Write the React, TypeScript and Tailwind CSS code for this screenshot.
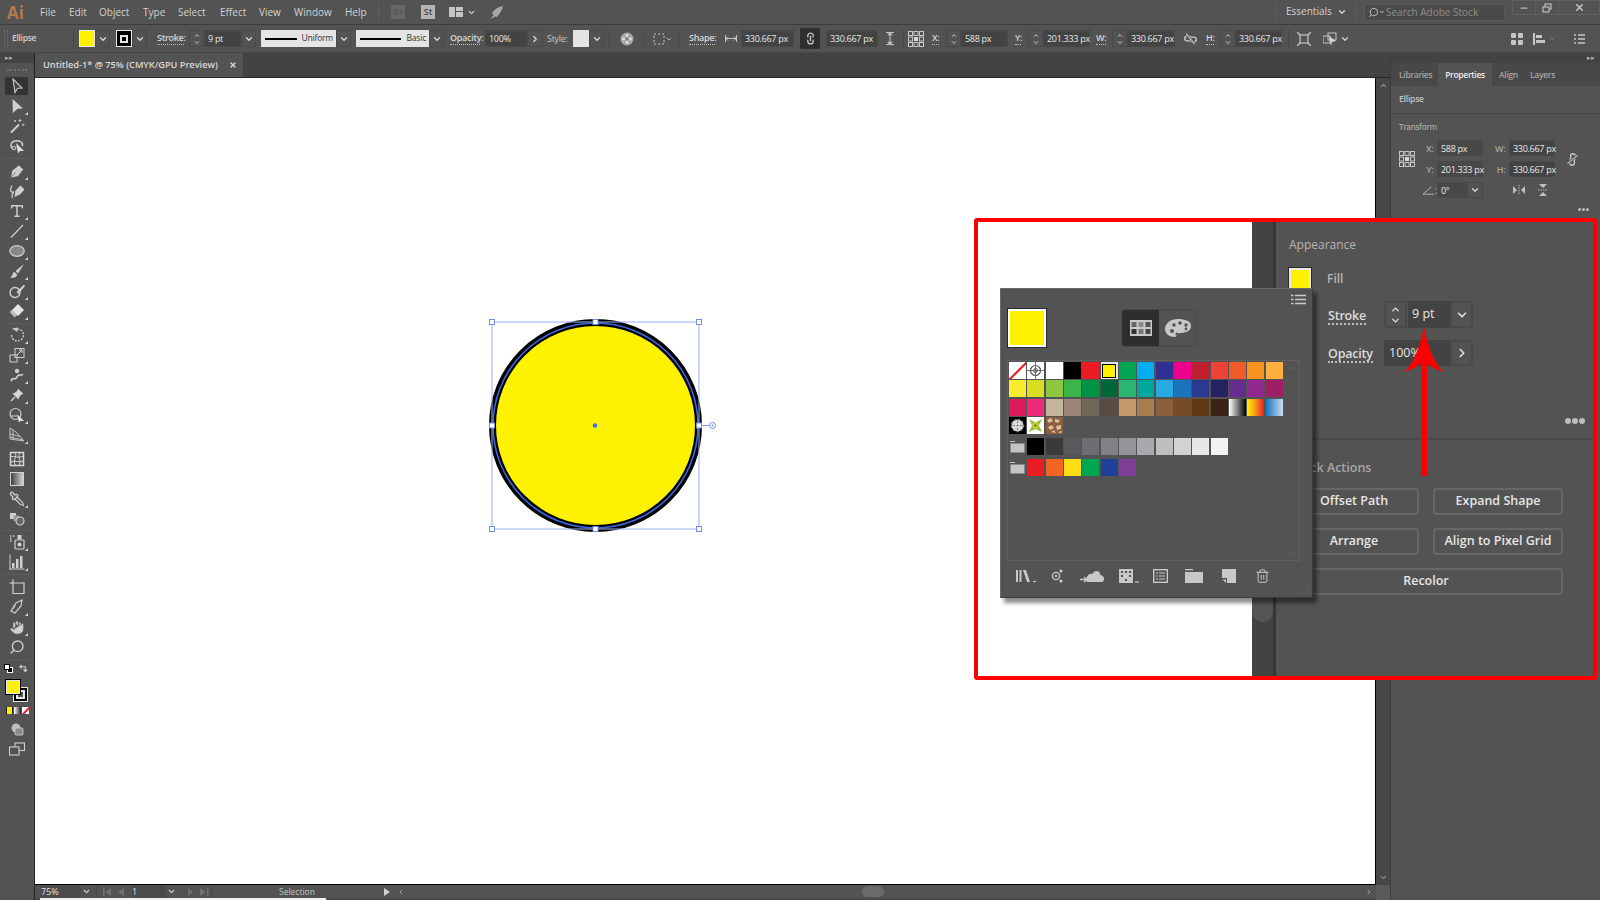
import React from 'react';
import { ChevronDown, ChevronUp, ChevronRight, ChevronLeft, Search, Hand, Pipette, Trash2, Type, Link2, X, Minus } from 'lucide-react';

const G = '#c6c6c6';

function Chev({ className = '' }: { className?: string }) {
  return (
    <div className={`h-[17px] w-[15px] flex items-center justify-center border border-[#494949] ${className}`}>
      <ChevronDown className="w-[10px] h-[10px] text-[#d8d8d8]" strokeWidth={3} />
    </div>
  );
}

function Spin({ className = '' }: { className?: string }) {
  return (
    <div className={`h-[17px] w-[15px] flex flex-col items-center justify-center border border-[#494949] ${className}`}>
      <ChevronUp className="w-[10px] h-[7px] text-[#d8d8d8]" strokeWidth={3} />
      <ChevronDown className="w-[10px] h-[7px] text-[#d8d8d8]" strokeWidth={3} />
    </div>
  );
}

function Field({ value, className = '' }: { value: string; className?: string }) {
  return (
    <div className={`h-[17px] bg-[#434343] border border-[#494949] pl-[3px] flex items-center text-[9px] leading-none tracking-[-0.3px] text-[#e8e8e8] whitespace-nowrap ${className}`}>
      {value}
    </div>
  );
}

function Sep({ className = '' }: { className?: string }) {
  return <div className={`w-px h-[20px] bg-[#484848] ${className}`} />;
}

function Label({ text, className = '' }: { text: string; className?: string }) {
  return (
    <div className={`text-[9px] leading-[12px] font-semibold text-[#d6d6d6] border-b border-dotted border-[#c0c0c0] tracking-[-0.3px] whitespace-nowrap ${className}`}>
      {text}
    </div>
  );
}

function RefGrid({ className = '' }: { className?: string }) {
  const cells = [0, 1, 2, 3, 4, 5, 6, 7, 8];
  return (
    <svg viewBox="0 0 16 16" className={className}>
      {cells.map(i => {
        const x = 0.5 + (i % 3) * 5.5;
        const y = 0.5 + Math.floor(i / 3) * 5.5;
        return i === 4
          ? <rect key={i} x={x} y={y} width="4" height="4" fill="#d8d8d8" />
          : <rect key={i} x={x} y={y} width="4" height="4" fill="none" stroke="#c8c8c8" strokeWidth="1" />;
      })}
    </svg>
  );
}

// broken chain link, a chain with a slash through it
function SlashedLink({ className = '' }: { className?: string }) {
  return (
    <svg viewBox="0 0 14 12" className={className}>
      <rect x="0.8" y="3" width="7" height="5" rx="2.5" fill="none" stroke="#c6c6c6" strokeWidth="1.5" />
      <rect x="6.2" y="4" width="7" height="5" rx="2.5" fill="none" stroke="#c6c6c6" strokeWidth="1.5" />
      <path d="M2.5 0.5L11.5 11.5" stroke="#535353" strokeWidth="3" />
      <path d="M2.5 0.5L11.5 11.5" stroke="#c6c6c6" strokeWidth="1.2" />
    </svg>
  );
}

function MenuBar() {
  const items = [
    { label: 'File', w: 'w-[29px]' },
    { label: 'Edit', w: 'w-[30px]' },
    { label: 'Object', w: 'w-[44px]' },
    { label: 'Type', w: 'w-[35px]' },
    { label: 'Select', w: 'w-[42px]' },
    { label: 'Effect', w: 'w-[39px]' },
    { label: 'View', w: 'w-[35px]' },
    { label: 'Window', w: 'w-[51px]' },
    { label: 'Help', w: 'w-[33px]' },
  ];
  return (
    <div className="h-[25px] flex items-center border-b border-[#3d3d3d] bg-[#535353]">
      <div className="ml-[7px] w-[33px] text-[17px] font-bold text-[#b27a4c] leading-none">Ai</div>
      {items.map(m => (
        <div key={m.label} className={`${m.w} -mt-[1px] text-[10px] text-[#d2d2d2] leading-none`}>{m.label}</div>
      ))}
      <div className="w-px h-[18px] bg-[#5e5e5e]" />
      <div className="ml-[12px] w-[14px] h-[14px] bg-[#666] text-[9px] leading-[14px] text-center font-semibold text-[#555]">Br</div>
      <div className="ml-[16px] w-[14px] h-[14px] bg-[#b4b4b4] text-[9px] leading-[14px] text-center font-semibold text-[#444]">St</div>
      <svg viewBox="0 0 14 10" className="ml-[14px] w-[14px] h-[10px]">
        <rect width="6" height="10" fill={G} />
        <rect x="7" width="7" height="4" fill={G} />
        <rect x="7" y="5" width="7" height="5" fill={G} />
      </svg>
      <ChevronDown className="ml-[4px] w-[9px] h-[9px] text-[#d0d0d0]" strokeWidth={3} />
      <svg viewBox="0 0 16 16" className="ml-[13px] w-[15px] h-[15px]">
        <path d="M15 1 C9 2 5 5 3 9 L5 10 L2 15 L7 12 L8 13 C11 10 14 6 15 1Z" fill="#a8a8a8" />
      </svg>
      <div className="ml-auto flex items-center">
        <div className="w-px h-[18px] bg-[#5e5e5e]" />
        <div className="ml-[9px] w-[48px] -mt-[2px] text-[10px] text-[#d2d2d2] leading-none">Essentials</div>
        <ChevronDown className="ml-[3px] w-[10px] h-[10px] text-[#d0d0d0]" strokeWidth={3} />
        <div className="ml-[9px] w-px h-[18px] bg-[#5e5e5e]" />
        <div className="ml-[7px] w-[141px] h-[17px] bg-[#4a4a4a] border border-[#5a5a5a] rounded-[2px] flex items-center pl-[3px]">
          <Search className="w-[11px] h-[11px] text-[#c0c0c0] -scale-x-100" strokeWidth={2} />
          <ChevronDown className="w-[6px] h-[6px] text-[#c0c0c0]" strokeWidth={4} />
          <span className="ml-[1px] text-[10px] leading-none text-[#8c8c8c]">Search Adobe Stock</span>
        </div>
        <div className="ml-[7px] -mt-[9px] flex h-[15px] border border-[#606060] rounded-b-[2px]">
          <div className="w-[23px] flex items-center justify-center border-r border-[#606060]">
            <Minus className="w-[10px] h-[10px] text-[#b8b8b8]" strokeWidth={3} />
          </div>
          <div className="w-[23px] flex items-center justify-center border-r border-[#606060]">
            <svg viewBox="0 0 10 10" className="w-[10px] h-[10px]"><rect x="3" y="1" width="6" height="5" fill="none" stroke="#c0c0c0" strokeWidth="1.2" /><rect x="1" y="4" width="6" height="5" fill="#535353" stroke="#c0c0c0" strokeWidth="1.2" /></svg>
          </div>
          <div className="w-[40px] flex items-center justify-center">
            <X className="w-[11px] h-[11px] text-[#c8c8c8]" strokeWidth={3} />
          </div>
        </div>
      </div>
    </div>
  );
}

function StrokePreview({ text, className, line }: { text: string; className: string; line: string }) {
  return (
    <div className={`h-[17px] bg-[#e4e4e4] flex items-center pl-[4px] ${className}`}>
      <div className={`h-[2px] bg-black flex-none ${line}`} />
      <span className="ml-auto mr-[3px] text-[8.5px] tracking-[-0.2px] leading-none text-[#333]">{text}</span>
    </div>
  );
}

function ControlBar() {
  return (
    <div className="h-[28px] flex items-center bg-[#535353] border-b border-[#474747]">
      <div className="ml-[4px] w-[4px] h-[18px] border-x border-dotted border-[#6e6e6e]" />
      <div className="ml-[4px] w-[61px] text-[8.5px] font-semibold tracking-[-0.3px] text-[#d0d0d0] leading-none">Ellipse</div>
      <Sep />
      <div className="ml-[5px] w-[16px] h-[17px] bg-[#fff200] border border-[#e8e8e8]" />
      <Chev />
      <div className="ml-[6px] w-[16px] h-[17px] bg-black border border-[#e8e8e8] flex items-center justify-center">
        <div className="w-[8px] h-[8px] border-2 border-[#e8e8e8] bg-black" />
      </div>
      <Chev />
      <Label text="Stroke:" className="ml-[10px] w-[27px]" />
      <Spin className="ml-[5px]" />
      <Field value="9 pt" className="w-[37px]" />
      <Chev />
      <StrokePreview text="Uniform" line="w-[32px]" className="ml-[5px] w-[75px]" />
      <Chev />
      <StrokePreview text="Basic" line="w-[41px]" className="ml-[5px] w-[73px]" />
      <Chev />
      <Label text="Opacity:" className="ml-[6px] w-[30px]" />
      <Field value="100%" className="ml-[5px] w-[42px]" />
      <div className="h-[17px] w-[16px] flex items-center justify-center border border-[#494949]">
        <ChevronRight className="w-[10px] h-[10px] text-[#d8d8d8]" strokeWidth={3} />
      </div>
      <div className="ml-[4px] w-[22px] text-[9px] tracking-[-0.3px] text-[#c8c8c8] leading-none">Style:</div>
      <div className="ml-[4px] w-[16px] h-[17px] bg-[#e4e4e4]" />
      <Chev />
      <Sep className="ml-[5px]" />
      <svg viewBox="0 0 14 14" className="ml-[10px] w-[14px] h-[14px]">
        <circle cx="7" cy="7" r="6.5" fill="#a8a8a8" />
        <circle cx="7" cy="3.5" r="1.4" fill="#dedede" /><circle cx="7" cy="10.5" r="1.4" fill="#dedede" />
        <circle cx="3.5" cy="7" r="1.4" fill="#dedede" /><circle cx="10.5" cy="7" r="1.4" fill="#dedede" />
        <circle cx="7" cy="7" r="1.2" fill="#777" />
      </svg>
      <Sep className="ml-[9px]" />
      <svg viewBox="0 0 12 12" className="ml-[9px] w-[12px] h-[12px]">
        <rect x="1" y="1" width="10" height="10" fill="none" stroke="#c0c0c0" strokeWidth="1" strokeDasharray="2 2" />
      </svg>
      <ChevronDown className="w-[8px] h-[8px] text-[#c0c0c0]" strokeWidth={2.5} />
      <Sep className="ml-[5px]" />
      <Label text="Shape:" className="ml-[10px] w-[26px]" />
      <svg viewBox="0 0 12 7" className="ml-[10px] w-[12px] h-[7px]">
        <path d="M0.5 0V7M11.5 0V7M1 3.5H11M3 1.5L1 3.5L3 5.5M9 1.5L11 3.5L9 5.5" stroke="#c6c6c6" fill="none" strokeWidth="1" />
      </svg>
      <Field value="330.667 px" className="ml-[4px] w-[53px]" />
      <div className="ml-[6px] w-[20px] h-[21px] bg-[#2f2f2f] rounded-[2px] flex items-center justify-center">
        <Link2 className="w-[13px] h-[13px] text-[#c8c8c8] rotate-90" strokeWidth={2.4} />
      </div>
      <Field value="330.667 px" className="ml-[6px] w-[52px]" />
      <svg viewBox="0 0 7 12" className="ml-[8px] w-[8px] h-[13px]">
        <path d="M0 0.5H7M0 11.5H7M3.5 1V11M1.5 3L3.5 1L5.5 3M1.5 9L3.5 11L5.5 9" stroke="#c6c6c6" fill="none" strokeWidth="1" />
      </svg>
      <Sep className="ml-[9px]" />
      <RefGrid className="ml-[4px] w-[16px] h-[16px]" />
      <Label text="X:" className="ml-[8px] w-[7px]" />
      <Spin className="ml-[7px]" />
      <Field value="588 px" className="w-[47px]" />
      <Label text="Y:" className="ml-[7px] w-[6px]" />
      <Spin className="ml-[7px]" />
      <Field value="201.333 px" className="w-[47px]" />
      <Label text="W:" className="ml-[6px] w-[10px]" />
      <Spin className="ml-[6px]" />
      <Field value="330.667 px" className="w-[48px]" />
      <SlashedLink className="ml-[9px] w-[13px] h-[12px]" />
      <Label text="H:" className="ml-[9px] w-[8px]" />
      <Spin className="ml-[6px]" />
      <Field value="330.667 px" className="w-[47px]" />
      <Sep className="ml-[6px]" />
      <svg viewBox="0 0 14 14" className="ml-[8px] w-[14px] h-[14px]">
        <rect x="3" y="3" width="8" height="8" fill="none" stroke="#c6c6c6" strokeWidth="1.2" />
        <path d="M0 0L3 3M14 0L11 3M0 14L3 11M14 14L11 11" stroke="#c6c6c6" strokeWidth="1.4" />
      </svg>
      <svg viewBox="0 0 16 14" className="ml-[12px] w-[16px] h-[14px]">
        <rect x="5" y="1" width="8" height="7" fill="none" stroke="#c6c6c6" strokeWidth="1" />
        <rect x="0" y="4" width="7" height="7" fill="none" stroke="#c6c6c6" strokeWidth="1" />
        <path d="M6 4L13 9L9 10L8 14Z" fill="#d4d4d4" />
      </svg>
      <ChevronDown className="ml-[1px] w-[10px] h-[10px] text-[#d0d0d0]" strokeWidth={3} />
      <div className="ml-auto flex items-center">
        <svg viewBox="0 0 12 12" className="w-[12px] h-[12px]">
          <rect width="5" height="5" rx="1" fill={G} /><rect x="7" width="5" height="5" rx="1" fill={G} />
          <rect y="7" width="5" height="5" rx="1" fill={G} /><rect x="7" y="7" width="5" height="5" rx="1" fill={G} />
        </svg>
        <svg viewBox="0 0 12 12" className="ml-[10px] w-[12px] h-[12px]">
          <rect width="2" height="12" fill={G} /><rect x="3" y="2" width="6" height="3" fill={G} /><rect x="3" y="7" width="9" height="3" fill={G} />
        </svg>
        <ChevronDown className="ml-[3px] w-[9px] h-[9px] text-[#707070]" strokeWidth={3} />
        <svg viewBox="0 0 11 10" className="ml-[17px] mr-[15px] w-[11px] h-[10px]">
          <path d="M0 1H2M4 1H11M0 5H2M4 5H11M0 9H2M4 9H11" stroke={G} strokeWidth="1.4" />
        </svg>
      </div>
    </div>
  );
}

// each tool is one 16x16 drawing
const tools: Record<string, React.ReactNode> = {
  selection: <path d="M4 1L13 10L8.6 10.2L6 14.5Z" fill="#404040" stroke="#cfcfcf" strokeWidth="1.1" />,
  direct: <path d="M3.5 1L14 10.5L8.8 10.7L3.8 15Z" fill="#cfcfcf" />,
  wand: <g><path d="M2 14.5L10 6.5" stroke="#d0d0d0" strokeWidth="2" /><path d="M11 1V4M9.5 2.5H12.5M14 5.5V8M13 6.8H15.5M6 2V4M5 3H7" stroke="#d0d0d0" strokeWidth="0.9" /></g>,
  lasso: <g><path d="M4 11C1 9 1 4 6 3C11 2 15 5 13 8" fill="none" stroke="#cfcfcf" strokeWidth="1.4" /><circle cx="5" cy="10" r="1.8" fill="none" stroke="#cfcfcf" /><path d="M7 5L15 13L11 13L9 15.5Z" fill="#dcdcdc" /></g>,
  pen: <path d="M1.5 15L3 7.5L10 2L14.5 6.5L9 13.5ZM1.5 15L6.5 9.5" fill="#cfcfcf" stroke="#535353" strokeWidth="0.7" />,
  curvature: <g><path d="M5.5 14L6.5 7.5L11.5 2.5L15.5 6.5L11 11.5Z" fill="#cfcfcf" /><path d="M3 2.5C0 7 2 10 4 9C6 8 1.5 12 3.5 15" fill="none" stroke="#cfcfcf" strokeWidth="1.3" /></g>,
  line: <path d="M2 14.5L14 2" stroke="#cfcfcf" strokeWidth="1.2" />,
  ellipse: <ellipse cx="8" cy="8" rx="7.2" ry="5.4" fill="#888" stroke="#d0d0d0" strokeWidth="1.2" />,
  brush: <g><path d="M15 1L6.5 8L9 10.5Z" fill="#cfcfcf" /><path d="M5.5 9C3 9.5 4.5 12.5 1 14.5C5 15.5 8.5 14 8 11Z" fill="#cfcfcf" /></g>,
  blob: <g><circle cx="6" cy="9.5" r="5" fill="none" stroke="#cfcfcf" strokeWidth="1.4" /><path d="M15 1.5L7.5 9L9.5 11L16 3Z" fill="#cfcfcf" /></g>,
  eraser: <g><path d="M9 1L15 7L9 13L3 7Z" fill="#e4e4e4" /><path d="M3 7L1 9L5.5 14L8 12Z" fill="#bdbdbd" stroke="#cfcfcf" strokeWidth="0.6" /></g>,
  rotate: <g><path d="M2.5 8A6 6 0 1 0 8 2" fill="none" stroke="#cfcfcf" strokeWidth="1.3" strokeDasharray="2 1.2" /><path d="M3 1.5L8.5 0.5L8.5 5Z" fill="#cfcfcf" /></g>,
  scale: <g><rect x="6" y="1.5" width="9" height="9" fill="none" stroke="#cfcfcf" strokeWidth="1" /><rect x="1" y="8" width="7" height="7" fill="none" stroke="#cfcfcf" strokeWidth="1" /><path d="M8 8L13 3M10 3H13V6" stroke="#dcdcdc" fill="none" /></g>,
  warp: <g><path d="M2 13C5 9 5 15 8 10C11 5 10 11 14 7" stroke="#cfcfcf" strokeWidth="1.6" fill="none" /><circle cx="8" cy="4" r="2.2" fill="#cfcfcf" /><circle cx="2.5" cy="13.5" r="1" fill="#cfcfcf" /></g>,
  pin: <g><path d="M9 1.5L14.5 7L12.5 7.5L10 10.5L9.5 12.5L3.5 6.5L5.5 6L8.5 3.5Z" fill="#d4d4d4" /><path d="M6 10L2 14" stroke="#d4d4d4" strokeWidth="1.3" /></g>,
  shapeBuilder: <g><circle cx="6.5" cy="7" r="5.5" fill="none" stroke="#cfcfcf" strokeWidth="1.2" /><path d="M8 7L15 14L11 14L10 16Z" fill="#e0e0e0" /><path d="M1 9H8" stroke="#cfcfcf" /></g>,
  perspective: <g fill="none" stroke="#cfcfcf" strokeWidth="0.9"><path d="M1 1V12L15 14L7 5Z" /><path d="M4 3.5V12.5M1 7L11 9.5M1 10L14 13" /></g>,
  mesh: <g fill="none" stroke="#d8d8d8" strokeWidth="1"><rect x="1.5" y="1.5" width="13" height="13" strokeWidth="1.5" /><path d="M6 1.5C9 5 3 9 6.5 14.5M11 1.5C8 6 13 9 10 14.5M1.5 6C5 4 9 8 14.5 5M1.5 11C6 9 9 12 14.5 10" /></g>,
  gradient: <g><defs><linearGradient id="tg" x1="0" x2="1"><stop offset="0" stopColor="#3a3a3a" /><stop offset="1" stopColor="#dadada" /></linearGradient></defs><rect x="1.5" y="1.5" width="13" height="13" fill="url(#tg)" stroke="#d0d0d0" /></g>,
  blend: <g><rect x="1" y="2" width="6" height="6" fill="#d0d0d0" /><rect x="4.5" y="4.5" width="5.5" height="5.5" fill="#999" /><circle cx="11" cy="10" r="4" fill="#666" stroke="#d0d0d0" strokeWidth="1.2" /></g>,
  symbol: <g><rect x="6" y="6" width="9" height="9" rx="1" fill="none" stroke="#d0d0d0" strokeWidth="1.2" /><circle cx="10.5" cy="10.5" r="2" fill="#d0d0d0" /><rect x="8.5" y="1" width="4" height="4.5" fill="#d0d0d0" /><path d="M1 2H2.5M4 2H5.5M1 4.5H2.5M1 7H2.5" stroke="#d0d0d0" strokeWidth="1.5" /></g>,
  graph: <g fill="#d0d0d0"><rect x="0.5" y="0.5" width="1" height="15" /><rect x="0.5" y="14.5" width="15" height="1" /><rect x="3" y="9" width="2.5" height="5" /><rect x="7" y="5" width="2.5" height="9" /><rect x="11" y="2" width="2.5" height="12" /></g>,
  artboard: <g fill="none" stroke="#cfcfcf" strokeWidth="1.2"><path d="M4 0.5V4H15V14.5H4V4" /><path d="M0.5 4H4" /></g>,
  slice: <g><path d="M13 1L7 4L2 12L6 14L12 7Z" fill="none" stroke="#cfcfcf" strokeWidth="1.2" /><path d="M7 4L2 12L6 8Z" fill="#cfcfcf" /></g>,
  drawMode: <g><circle cx="7" cy="7" r="4.5" fill="#bdbdbd" /><rect x="6" y="7" width="8" height="7" rx="1" fill="#8a8a8a" stroke="#d0d0d0" strokeWidth="0.8" /></g>,
  screen: <g fill="#535353" stroke="#cfcfcf" strokeWidth="1.1"><rect x="6" y="2" width="9.5" height="7.5" /><rect x="0.5" y="6" width="9.5" height="8" /></g>,
};

function Tool({ icon, corner = true, active = false }: { icon: React.ReactNode; corner?: boolean; active?: boolean }) {
  return (
    <div className="relative h-[20px] flex items-center justify-center">
      {active && <div className="absolute left-[5px] right-[6px] top-[1px] bottom-[1px] bg-[#333] rounded-[2px]" />}
      <div className="relative w-[16px] h-[16px] flex items-center justify-center">{icon}</div>
      {corner && <div className="absolute right-[6px] bottom-[1px] w-0 h-0 border-l-[3px] border-l-transparent border-b-[3px] border-b-[#d8d8d8]" />}
    </div>
  );
}

function SvgTool({ name, corner = true, active = false }: { name: string; corner?: boolean; active?: boolean }) {
  return <Tool corner={corner} active={active} icon={<svg viewBox="0 0 16 16" className="w-[16px] h-[16px]">{tools[name]}</svg>} />;
}

function ToolSep({ className }: { className: string }) {
  return (
    <div className={`flex items-center ${className}`}>
      <div className="mx-[3px] flex-1 h-px bg-[#5c5c5c]" />
    </div>
  );
}

function Toolbar() {
  return (
    <div className="w-[35px] flex-none bg-[#535353] border-r border-[#222] flex flex-col">
      <div className="h-[10px] bg-[#434343] text-[7px] leading-[9px] pl-[5px] text-[#b0b0b0]">▸▸</div>
      <div className="h-[13px] flex items-center justify-center">
        <div className="w-[20px] border-t-2 border-dotted border-[#6e6e6e]" />
      </div>
      <SvgTool name="selection" corner={false} active />
      <SvgTool name="direct" />
      <SvgTool name="wand" corner={false} />
      <SvgTool name="lasso" corner={false} />
      <ToolSep className="h-[5px]" />
      <SvgTool name="pen" />
      <SvgTool name="curvature" corner={false} />
      <Tool icon={<Type className="w-[16px] h-[16px] text-[#d0d0d0]" strokeWidth={2.2} />} />
      <SvgTool name="line" />
      <SvgTool name="ellipse" />
      <SvgTool name="brush" />
      <SvgTool name="blob" />
      <SvgTool name="eraser" />
      <ToolSep className="h-[4px]" />
      <SvgTool name="rotate" />
      <SvgTool name="scale" />
      <SvgTool name="warp" />
      <SvgTool name="pin" />
      <SvgTool name="shapeBuilder" />
      <SvgTool name="perspective" />
      <div className="h-[4px]" />
      <SvgTool name="mesh" corner={false} />
      <SvgTool name="gradient" corner={false} />
      <Tool icon={<Pipette className="w-[16px] h-[16px] text-[#d0d0d0] -scale-x-100" strokeWidth={1.8} />} />
      <SvgTool name="blend" corner={false} />
      <ToolSep className="h-[3px]" />
      <SvgTool name="symbol" />
      <SvgTool name="graph" />
      <ToolSep className="h-[5px]" />
      <SvgTool name="artboard" corner={false} />
      <SvgTool name="slice" />
      <Tool icon={<Hand className="w-[17px] h-[17px] text-[#535353]" fill="#d0d0d0" strokeWidth={1.1} />} />
      <Tool corner={false} icon={<Search className="w-[16px] h-[16px] text-[#d0d0d0] -scale-x-100" strokeWidth={2} />} />
      <ToolSep className="h-[4px]" />
      <div className="h-[14px] flex items-center justify-between pl-[4px] pr-[6px]">
        <div className="relative w-[9px] h-[9px]">
          <div className="absolute right-0 bottom-0 w-[6px] h-[6px] border border-white bg-black" />
          <div className="absolute left-0 top-0 w-[6px] h-[6px] border border-black bg-white" />
        </div>
        <svg viewBox="0 0 10 10" className="w-[9px] h-[9px]"><path d="M1 3H7V8M5 6L7 8.5L9 6M3 1L1 3L3 5" fill="none" stroke="#cfcfcf" strokeWidth="1.2" /></svg>
      </div>
      <div className="relative h-[30px]">
        <div className="absolute left-[13px] top-[12px] w-[15px] h-[15px] bg-black border border-[#e8e8e8] flex items-center justify-center">
          <div className="w-[9px] h-[9px] border-2 border-[#e8e8e8] bg-[#535353]" />
        </div>
        <div className="absolute left-[5px] top-[4px] w-[16px] h-[16px] bg-[#fff200] border border-black outline outline-1 outline-[#e8e8e8] -outline-offset-2" />
      </div>
      <div className="h-[10px] flex items-center pl-[6px] gap-px">
        <div className="w-[7px] h-[7px] bg-[#fff200] border-x border-[#222] " />
        <div className="w-[7px] h-[7px] bg-[linear-gradient(90deg,#fff,#222)]" />
        <div className="w-[7px] h-[7px] bg-white relative overflow-hidden">
          <div className="absolute left-[3px] -top-[1px] w-[1.5px] h-[10px] bg-[#ed1c24] rotate-45" />
        </div>
      </div>
      <div className="h-[4px]" />
      <SvgTool name="drawMode" corner={false} />
      <SvgTool name="screen" corner={false} />
    </div>
  );
}

function Handle({ x, y }: { x: number; y: number }) {
  return <rect x={x - 2.5} y={y - 2.5} width="5" height="5" fill="#fff" stroke="#6f8ff0" strokeWidth="1" />;
}

function Canvas() {
  return (
    <div className="relative flex-1 bg-white border-r border-b border-black">
      <svg viewBox="480 310 250 230" className="absolute left-[445px] top-[232px] w-[250px] h-[230px]">
        <circle cx="595.5" cy="425.5" r="103" fill="#fff200" stroke="#000" strokeWidth="7" />
        <circle cx="595.5" cy="425.5" r="102.5" fill="none" stroke="#3b67d8" strokeWidth="1.6" />
        <rect x="492" y="322" width="207" height="207" fill="none" stroke="#97aef5" strokeWidth="1" />
        <Handle x={492} y={322} />
        <Handle x={595.5} y={322} />
        <Handle x={699} y={322} />
        <Handle x={492} y={425.5} />
        <Handle x={699} y={425.5} />
        <Handle x={492} y={529} />
        <Handle x={595.5} y={529} />
        <Handle x={699} y={529} />
        <circle cx="595" cy="425.5" r="2.2" fill="#3f6fe6" />
        <path d="M701 425.5H709" stroke="#7f9cf0" strokeWidth="1" />
        <circle cx="712.5" cy="425.5" r="3" fill="none" stroke="#6f8ff0" strokeWidth="1" />
        <circle cx="712.5" cy="425.5" r="1" fill="#6f8ff0" />
      </svg>
    </div>
  );
}

function StatusBar() {
  return (
    <div className="h-[15px] flex-none flex flex-col">
      <div className="h-[13px] flex items-center bg-[#535353]">
        <div className="ml-[5px] w-[41px] h-full bg-[#4b4b4b] pl-[1px] text-[9px] leading-[14px] text-[#e0e0e0]">75%</div>
        <ChevronDown className="ml-[1px] w-[9px] h-[9px] text-[#d8d8d8]" strokeWidth={3} />
        <div className="ml-[5px] w-px h-full bg-[#474747]" />
        <svg viewBox="0 0 22 8" className="ml-[6px] w-[22px] h-[8px]"><path d="M0 0H1.5V8H0ZM8 0V8L2.5 4ZM21 0V8L15 4Z" fill="#707070" /></svg>
        <div className="ml-[7px] w-[34px] h-full bg-[#4b4b4b] text-[9px] leading-[14px] text-[#e0e0e0]">1</div>
        <ChevronDown className="ml-[1px] w-[9px] h-[9px] text-[#d8d8d8]" strokeWidth={3} />
        <svg viewBox="0 0 22 8" className="ml-[11px] w-[22px] h-[8px]"><path d="M1 0V8L6 4ZM13 0V8L19 4ZM20 0H21.5V8H20Z" fill="#707070" /></svg>
        <div className="ml-[2px] w-px h-full bg-[#474747]" />
        <div className="w-[172px] pl-[67px] pt-[2px] text-[8.5px] leading-none text-[#c4c4c4]">Selection</div>
        <svg viewBox="0 0 6 8" className="w-[6px] h-[8px]"><path d="M0 0V8L6 4Z" fill="#d0d0d0" /></svg>
        <ChevronLeft className="ml-[7px] w-[8px] h-[8px] text-[#a0a0a0]" strokeWidth={3} />
        <div className="ml-[457px] w-[22px] h-[11px] bg-[#6a6a6a] rounded-full" />
        <ChevronRight className="ml-auto mr-[3px] w-[8px] h-[8px] text-[#a0a0a0]" strokeWidth={3} />
      </div>
      <div className="h-[2px] bg-[#4a4a4a] flex">
        <div className="ml-[5px] w-[286px] bg-[#f0f0f0]" />
      </div>
    </div>
  );
}

function Workspace() {
  return (
    <div className="w-[1355px] flex-none flex flex-col">
      <div className="h-[25px] flex-none bg-[#434343] flex border-b border-[#262626]">
        <div className="w-[208px] bg-[#535353] flex items-center pl-[8px]">
          <span className="text-[9.2px] font-semibold text-[#dadada] leading-none whitespace-nowrap">Untitled-1* @ 75% (CMYK/GPU Preview)</span>
          <X className="ml-[11px] w-[8px] h-[8px] text-[#dadada]" strokeWidth={4} />
        </div>
      </div>
      <div className="flex-1 flex min-h-0">
        <Canvas />
        <div className="w-[14px] flex-none bg-[#474747] flex flex-col items-center justify-between pt-[3px] pb-[3px]">
          <ChevronUp className="w-[9px] h-[9px] text-[#8c8c8c]" strokeWidth={3} />
          <ChevronDown className="w-[9px] h-[9px] text-[#8c8c8c]" strokeWidth={3} />
        </div>
      </div>
      <div className="flex">
        <div className="flex-1"><StatusBar /></div>
        <div className="w-[14px] bg-[#5a5a5a]" />
      </div>
    </div>
  );
}

function PropRow({ label, value, right, rightValue }: { label: string; value: string; right: string; rightValue: string }) {
  return (
    <div className="flex items-center h-[16px]">
      <div className="w-[46px] pr-[3px] text-right text-[9px] font-semibold text-[#a8a8a8] leading-none">{label}</div>
      <Field value={value} className="w-[46px] !h-[16px] !bg-[#484848]" />
      <div className="w-[26px] pr-[3px] text-right text-[9px] font-semibold text-[#a8a8a8] leading-none">{right}</div>
      <Field value={rightValue} className="w-[46px] !h-[16px]" />
    </div>
  );
}

function RightPanel() {
  return (
    <div className="flex-1 bg-[#535353] border-l border-[#3c3c3c] flex flex-col">
      <div className="h-[10px] bg-[#434343] text-[7px] leading-[9px] text-right pr-[5px] text-[#b0b0b0]">▸▸</div>
      <div className="h-[23px] bg-[#484848] flex text-[8.5px] tracking-[-0.3px] font-semibold">
        <div className="w-[47px] pl-[8px] leading-[23px] text-[#a4a4a4]">Libraries</div>
        <div className="w-[54px] text-center leading-[23px] text-[#ececec] bg-[#535353]">Properties</div>
        <div className="w-[36px] pl-[7px] leading-[23px] text-[#a4a4a4]">Align</div>
        <div className="w-[38px] pl-[2px] leading-[23px] text-[#a4a4a4]">Layers</div>
      </div>
      <div className="h-[28px] pl-[8px] flex items-center text-[8.5px] tracking-[-0.2px] font-semibold text-[#c6c6c6] border-b border-[#474747]">Ellipse</div>
      <div className="pl-[8px] mt-[7px] h-[12px] text-[8px] tracking-[-0.3px] font-semibold text-[#a8a8a8] leading-[12px]">Transform</div>
      <div className="mt-[7px] relative flex flex-col gap-[5px]">
        <PropRow label="X:" value="588 px" right="W:" rightValue="330.667 px" />
        <PropRow label="Y:" value="201.333 px" right="H:" rightValue="330.667 px" />
        <div className="flex items-center h-[16px]">
          <svg viewBox="0 0 14 10" className="ml-[31px] w-[13px] h-[10px]"><path d="M1 9.5H13M1 9.5L10 1.5" stroke="#b8b8b8" fill="none" /></svg>
          <span className="text-[10px] text-[#a8a8a8] leading-none w-[2px]">:</span>
          <Field value="0°" className="w-[30px] !h-[16px] !bg-[#484848]" />
          <Chev className="!h-[16px] !w-[16px]" />
          <svg viewBox="0 0 12 10" className="ml-[30px] w-[12px] h-[10px]"><path d="M0 1V9L4 5ZM12 1V9L8 5Z" fill="#c0c0c0" /><path d="M6 0V10" stroke="#c0c0c0" strokeDasharray="1.5 1" /></svg>
          <svg viewBox="0 0 10 12" className="ml-[13px] w-[10px] h-[12px]"><path d="M1 0H9L5 4ZM1 12H9L5 8Z" fill="#c0c0c0" /><path d="M0 6H10" stroke="#c0c0c0" strokeDasharray="1.5 1" /></svg>
        </div>
        <RefGrid className="absolute left-[8px] top-[11px] w-[16px] h-[16px]" />
        <SlashedLink className="absolute left-[175px] top-[13px] w-[13px] h-[13px] rotate-90" />
      </div>
      <div className="mt-[10px] pr-[11px] flex justify-end gap-[1px]">
        <div className="w-[3px] h-[3px] bg-[#c0c0c0] rounded-full" /><div className="w-[3px] h-[3px] bg-[#c0c0c0] rounded-full" /><div className="w-[3px] h-[3px] bg-[#c0c0c0] rounded-full" />
      </div>
    </div>
  );
}

const rows = [
  ['none', 'reg', '#ffffff', '#000000', '#ed1c24', 'sel', '#00a651', '#00aeef', '#2e3192', '#ec008c', '#be1e2d', '#ef4136', '#f15a29', '#f7941d', '#fbb040'],
  ['#f9ed32', '#d7df23', '#8dc63f', '#39b54a', '#009444', '#006838', '#2bb673', '#00a79d', '#27aae1', '#1c75bc', '#2b3990', '#262262', '#662d91', '#92278f', '#9e1f63'],
  ['#da1c5c', '#ee2a7b', '#c2b59b', '#9b8579', '#726658', '#594a42', '#c49a6c', '#a97c50', '#8b5e3c', '#754c29', '#603913', '#3c2415', 'g1', 'g2', 'g3'],
];
const grays = ['#000000', '#3a3a3c', '#58595b', '#6d6e71', '#808285', '#939598', '#a7a9ac', '#bcbec0', '#d1d3d4', '#e6e7e8', '#f1f2f2'];
const brights = ['#ed1c24', '#f26522', '#ffde17', '#00a651', '#21409a', '#7f3f98'];

function Swatch({ c }: { c: string }) {
  if (c === 'none') return (
    <div className="relative w-[17px] h-[17px] bg-white overflow-hidden">
      <div className="absolute left-[7.5px] -top-[3px] w-[2px] h-[24px] bg-[#ed1c24] rotate-45" />
    </div>
  );
  if (c === 'reg') return (
    <svg viewBox="0 0 17 17" className="w-[17px] h-[17px] bg-white">
      <circle cx="8.5" cy="8.5" r="5" fill="none" stroke="#555" strokeWidth="1.2" />
      <circle cx="8.5" cy="8.5" r="2" fill="none" stroke="#555" />
      <path d="M8.5 0V17M0 8.5H17" stroke="#555" strokeWidth="0.8" />
    </svg>
  );
  if (c === 'sel') return (
    <div className="w-[17px] h-[17px] bg-[#e8e8e8] p-[1.5px]">
      <div className="w-full h-full bg-[#fff200] border border-black" />
    </div>
  );
  if (c === 'g1') return <div className="w-[17px] h-[17px] bg-[linear-gradient(90deg,#fff,#000)]" />;
  if (c === 'g2') return <div className="w-[17px] h-[17px] bg-[linear-gradient(90deg,#fff200,#f7941d,#ed1c24)]" />;
  if (c === 'g3') return (
    <div className="w-[17px] h-[17px] bg-[linear-gradient(90deg,#1c75bc,#6fa9dc,#c8def2)]" />
  );
  return <div className="w-[17px] h-[17px]" style={{ backgroundColor: c }} />;
}

function FolderIcon() {
  return (
    <svg viewBox="0 0 17 17" className="w-[17px] h-[17px]">
      <rect x="1" y="3" width="5" height="1" fill="#c8c8c8" />
      <rect x="1.5" y="5.5" width="14" height="9" fill="#c4c4c4" stroke="#8a8a8a" strokeWidth="0.6" />
    </svg>
  );
}

function SwatchesPopup() {
  return (
    <div className="absolute left-[22px] top-[66px] w-[313px] h-[310px] bg-[#535353] border border-[#6a6a6a] border-b-[#3a3a3a] border-r-[#3a3a3a] shadow-[4px_5px_4px_rgba(0,0,0,0.45)] flex flex-col">
      <div className="h-[20px] flex justify-end items-center pr-[6px]">
        <svg viewBox="0 0 15 11" className="w-[15px] h-[11px]">
          <path d="M0 1.5H2.5M4 1.5H15M0 5.5H2.5M4 5.5H15M0 9.5H2.5M4 9.5H15" stroke="#cccccc" strokeWidth="1.6" />
        </svg>
      </div>
      <div className="h-[51px] flex pl-[7px]">
        <div className="w-[38px] h-[38px] bg-[#fff200] border-2 border-white outline outline-1 outline-[#2a2a2a]" />
        <div className="ml-[75px] flex h-[38px] w-[76px] border border-[#4a4a4a] rounded-[3px]">
          <div className="w-[37px] bg-[#2e2e2e] rounded-l-[3px] flex items-center justify-center">
            <svg viewBox="0 0 22 16" className="w-[22px] h-[16px]">
              <rect width="22" height="16" fill="#c8c8c8" />
              <rect x="1.5" y="2" width="5" height="5" fill="#666" /><rect x="8.5" y="2" width="5" height="5" fill="#8a8a8a" /><rect x="15.5" y="2" width="5" height="5" fill="#555" />
              <rect x="1.5" y="9" width="5" height="5" fill="#333" /><rect x="8.5" y="9" width="5" height="5" fill="#777" /><rect x="15.5" y="9" width="5" height="5" fill="#444" />
            </svg>
          </div>
          <div className="flex-1 flex items-center justify-center">
            <svg viewBox="0 0 26 20" className="w-[26px] h-[20px]">
              <path d="M13 1C6 1 0 5 0 11C0 16 5 19 9 19C13 19 12 15 15 15C19 15 26 14 26 8C26 3 20 1 13 1Z" fill="#c8c8c8" />
              <circle cx="7" cy="13" r="2" fill="#535353" /><circle cx="12" cy="16" r="1.6" fill="#535353" /><circle cx="9" cy="7" r="1.8" fill="#535353" /><circle cx="15" cy="5" r="1.8" fill="#535353" /><circle cx="21" cy="7" r="1.8" fill="#535353" /><circle cx="21" cy="11" r="1.4" fill="#535353" />
            </svg>
          </div>
        </div>
      </div>
      <div className="relative ml-[6px] w-[293px] h-[201px] border border-[#5f5f5f] pl-[1px] pt-[1px] flex flex-col">
        <div className="grid grid-cols-[repeat(15,17px)] gap-x-[1.33px] gap-y-[1.35px]">
          {rows.flat().map((c, i) => <Swatch key={i} c={c} />)}
          <svg viewBox="0 0 17 17" className="w-[17px] h-[17px] bg-black">
            <circle cx="8.5" cy="8.5" r="6" fill="#ddd" /><circle cx="8.5" cy="8.5" r="6" fill="none" stroke="#888" strokeWidth="1.5" strokeDasharray="2 2" /><path d="M4 8.5H13M8.5 4V13" stroke="#777" strokeDasharray="2 1.5" />
          </svg>
          <svg viewBox="0 0 17 17" className="w-[17px] h-[17px] bg-white">
            <path d="M2 2L8.5 5.5L15 2L12 8.5L15 15L8.5 12L2 15L5 8.5Z" fill="#8dc63f" /><circle cx="8.5" cy="8.5" r="3" fill="#f2c01e" /><circle cx="8.5" cy="8.5" r="1.3" fill="#39934a" />
          </svg>
          <svg viewBox="0 0 17 17" className="w-[17px] h-[17px] bg-[#8b5e3c]">
            <path d="M1 3L5 1L7 4L3 6ZM9 2L14 3L12 6L9 5ZM2 10L6 8L8 11L4 13ZM10 9L15 8L15 12L11 13ZM5 15L8 13L10 16ZM12 15L16 14L15 16.5Z" fill="#d8c0a4" />
          </svg>
        </div>
        <div className="mt-[4px] flex gap-x-[1.33px]">
          <FolderIcon />
          {grays.map(c => <Swatch key={c} c={c} />)}
        </div>
        <div className="mt-[4px] flex gap-x-[1.33px]">
          <FolderIcon />
          {brights.map(c => <Swatch key={c} c={c} />)}
        </div>
        <ChevronUp className="absolute right-[2px] top-[1px] w-[12px] h-[12px] text-[#5f5f5f]" strokeWidth={2.5} />
        <ChevronDown className="absolute right-[2px] bottom-[0px] w-[12px] h-[12px] text-[#5f5f5f]" strokeWidth={2.5} />
      </div>
      <div className="flex-1 flex items-center pl-[15px] pb-[6px] relative">
        <svg viewBox="0 0 20 14" className="w-[20px] h-[14px]"><path d="M0 1H2V13H0ZM3.5 1H5.5V13H3.5ZM7 1L10 1L14 13L11 13Z" fill="#c8c8c8" /><path d="M17 12.5H20" stroke="#c8c8c8" strokeWidth="1.2" /></svg>
        <svg viewBox="0 0 14 14" className="ml-[14px] w-[14px] h-[14px]"><circle cx="6" cy="7" r="3.6" fill="none" stroke="#c8c8c8" strokeWidth="1.4" /><circle cx="6" cy="7" r="1.2" fill="#c8c8c8" /><circle cx="11" cy="2" r="1.6" fill="#c8c8c8" /><circle cx="11" cy="12" r="1.6" fill="#c8c8c8" /></svg>
        <svg viewBox="0 0 24 14" className="ml-[16px] w-[24px] h-[14px]"><path d="M8 13C6 13 5 11 6.5 9.5C7 6 10 4 12.5 5C14 0.5 20 1 20.5 6C23 6.5 24.5 8.5 24 11C23.5 12.5 22.5 13 21 13Z" fill="#c8c8c8" /><path d="M0 10.5H6M4 8L7 10.5L4 13" stroke="#c8c8c8" strokeWidth="1.4" fill="#535353" /></svg>
        <svg viewBox="0 0 20 14" className="ml-[15px] w-[20px] h-[14px]">
          <rect width="14" height="14" fill="#c8c8c8" />
          <path d="M2 2H4V4H2ZM6 2H8V4H6ZM10 2H12V4H10ZM2 6H4V8H2ZM10 6H12V8H10ZM6 10H8V12H6Z" fill="#535353" />
          <path d="M16 13H20" stroke="#c8c8c8" strokeWidth="1.2" />
        </svg>
        <svg viewBox="0 0 15 14" className="ml-[14px] w-[15px] h-[14px]"><rect x="0.7" y="0.7" width="13.6" height="12.6" fill="#535353" stroke="#c8c8c8" strokeWidth="1.4" /><path d="M3 4H5M6 4H12M3 7H5M6 7H12M3 10H5M6 10H12" stroke="#c8c8c8" strokeWidth="1.2" /></svg>
        <svg viewBox="0 0 18 14" className="ml-[17px] w-[18px] h-[14px]"><rect x="0" y="0" width="8" height="1.3" fill="#c8c8c8" /><rect x="0" y="3" width="18" height="11" fill="#c8c8c8" /></svg>
        <svg viewBox="0 0 14 14" className="ml-[19px] w-[14px] h-[14px]"><path d="M0 0H14V14H5V9H0Z" fill="#c8c8c8" /><path d="M0.5 10.5H4V14Z" fill="#c8c8c8" /></svg>
        <Trash2 className="ml-[19px] w-[15px] h-[16px] text-[#c8c8c8]" strokeWidth={1.6} />
        <svg viewBox="0 0 12 12" className="absolute right-[2px] bottom-[2px] w-[12px] h-[12px]">
          <path d="M10 2H11M7 5H8M10 5H11M4 8H5M7 8H8M10 8H11M1 11H2M4 11H5M7 11H8M10 11H11" stroke="#6a6a6a" strokeWidth="1" />
        </svg>
      </div>
    </div>
  );
}

function QuickButton({ label, className = '' }: { label: string; className?: string }) {
  return (
    <div className={`h-[27px] border-2 border-[#676767] rounded-[3px] flex items-center justify-center text-[12.5px] font-semibold text-[#e6e6e6] leading-none ${className}`}>
      {label}
    </div>
  );
}

function BigLabel({ text }: { text: string }) {
  return (
    <div className="w-[56px] flex pt-[3px]">
      <span className="text-[12.5px] leading-[15px] font-semibold tracking-[-0.2px] text-[#dcdcdc] border-b-2 border-dotted border-[#bdbdbd]">{text}</span>
    </div>
  );
}

function ZoomedPanel() {
  return (
    <div className="absolute left-[974px] top-[218px] w-[623px] h-[462px] border-4 border-[#ff0000] rounded-[3px] flex overflow-hidden">
      <div className="w-[274px] bg-white" />
      <div className="w-[21px] bg-[#434343] relative">
        <div className="absolute left-0 right-0 top-[360px] h-[40px] bg-[#555] rounded-b-[10px]" />
      </div>
      <div className="w-[3px] bg-[#363636]" />
      <div className="flex-1 bg-[#535353] flex flex-col">
        <div className="ml-[13px] mt-[16px] h-[14px] text-[12px] leading-[14px] text-[#b4b4b4]">Appearance</div>
        <div className="ml-[13px] mt-[16px] flex items-center h-[22px]">
          <div className="w-[22px] h-[22px] bg-[#fff200] border-2 border-[#e8e8e8] outline outline-1 outline-[#2a2a2a]" />
          <span className="ml-[16px] text-[12px] font-semibold text-[#b4b4b4] leading-none">Fill</span>
        </div>
        <div className="ml-[52px] mt-[11px] flex items-center h-[27px]">
          <BigLabel text="Stroke" />
          <div className="w-[23px] h-[27px] border-2 border-[#4a4a4a] rounded-l-[3px] flex flex-col items-center justify-center">
            <ChevronUp className="w-[15px] h-[11px] text-[#dedede]" strokeWidth={3} />
            <ChevronDown className="w-[15px] h-[11px] text-[#dedede]" strokeWidth={3} />
          </div>
          <div className="ml-[1px] w-[42px] h-[27px] bg-[#434343] pl-[4px] flex items-center text-[12.5px] text-[#e6e6e6] leading-none">9 pt</div>
          <div className="w-[23px] h-[27px] border-2 border-[#4a4a4a] rounded-r-[3px] flex items-center justify-center">
            <ChevronDown className="w-[14px] h-[14px] text-[#dedede]" strokeWidth={3} />
          </div>
        </div>
        <div className="ml-[52px] mt-[12px] flex items-center h-[26px]">
          <BigLabel text="Opacity" />
          <div className="w-[66px] h-[26px] bg-[#434343] pl-[5px] flex items-center text-[12.5px] text-[#e6e6e6] leading-none">100%</div>
          <div className="w-[23px] h-[26px] border-2 border-[#4a4a4a] rounded-r-[3px] flex items-center justify-center">
            <ChevronRight className="w-[14px] h-[14px] text-[#dedede]" strokeWidth={3} />
          </div>
        </div>
        <div className="mt-[52px] pr-[8px] h-[6px] flex justify-end gap-[1px]">
          <div className="w-[6px] h-[6px] bg-[#bcbcbc] rounded-full" /><div className="w-[6px] h-[6px] bg-[#bcbcbc] rounded-full" /><div className="w-[6px] h-[6px] bg-[#bcbcbc] rounded-full" />
        </div>
        <div className="mt-[14px] h-[2px] bg-[#4a4a4a]" />
        <div className="ml-[13px] mt-[21px] h-[14px] text-[12.5px] leading-[14px] font-semibold text-[#a8a8a8]">Quick Actions</div>
        <div className="ml-[13px] mt-[13px] w-[274px] grid grid-cols-2 gap-x-[14px] gap-y-[13px]">
          <QuickButton label="Offset Path" />
          <QuickButton label="Expand Shape" />
          <QuickButton label="Arrange" />
          <QuickButton label="Align to Pixel Grid" />
          <QuickButton label="Recolor" className="col-span-2" />
        </div>
      </div>
      <SwatchesPopup />
      <svg viewBox="0 0 40 152" className="absolute left-[426px] top-[104px] w-[40px] h-[152px]">
        <path d="M20 0C23 18 30 38 40 46C32 43 26 41 23 37V150H17V37C14 41 8 43 0 46C10 38 17 18 20 0Z" fill="#ff0000" />
      </svg>
    </div>
  );
}

export default function App() {
  return (
    <div className="relative w-[1600px] h-[900px] overflow-hidden bg-[#535353] font-['Open_Sans',sans-serif]">
      <MenuBar />
      <ControlBar />
      <div className="flex h-[847px]">
        <Toolbar />
        <Workspace />
        <RightPanel />
      </div>
      <ZoomedPanel />
    </div>
  );
}
